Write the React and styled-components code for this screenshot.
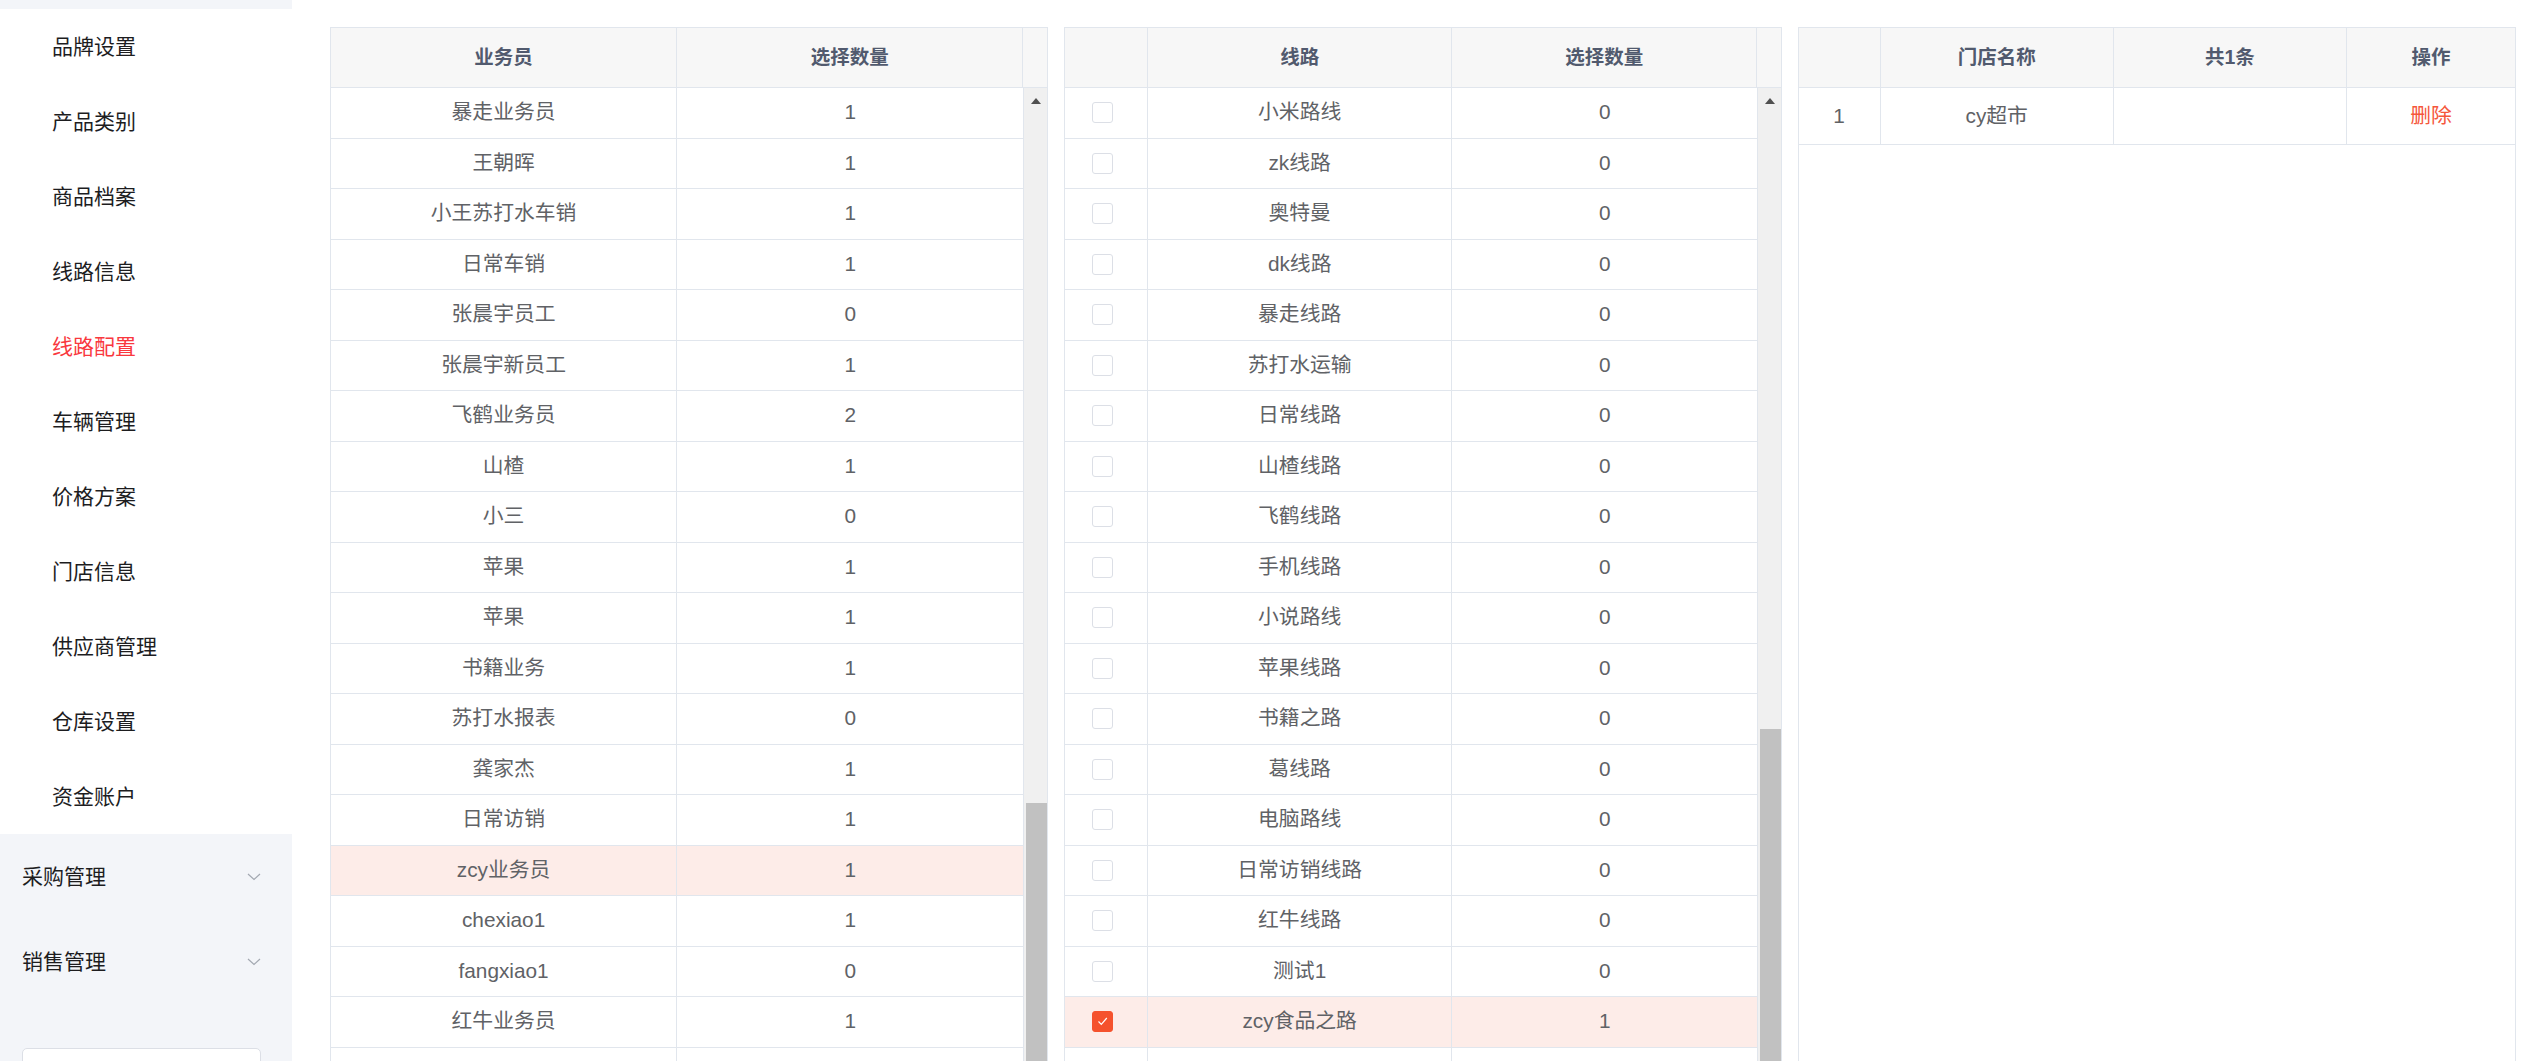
import React from "react";
import styled, { createGlobalStyle } from "styled-components";

const GlobalStyle = createGlobalStyle`
  html, body {
    margin: 0;
    padding: 0;
    background: #ffffff;
    overflow: hidden;
  }
  body {
    font-family: "Liberation Sans", "Noto Sans CJK SC", sans-serif;
  }
  * { box-sizing: border-box; }
`;

const Layout = styled.div`
  display: flex;
  height: 1061px;
  overflow: hidden;
`;

const Sidebar = styled.aside`
  width: 292px;
  flex-shrink: 0;
  background: #f3f5f9;
  padding-top: 9px;
  display: flex;
  flex-direction: column;
  & > * { flex-shrink: 0; }
`;

const SubMenu = styled.ul`
  list-style: none;
  margin: 0;
  padding: 0;
  background: #ffffff;
`;

const SubItem = styled.li`
  height: 75px;
  display: flex;
  align-items: center;
  padding-left: 52px;
  font-size: 21px;
  line-height: 1;
  color: ${(p) => (p.$active ? "#f9383e" : "#1d1d1f")};
`;

const ParentItem = styled.div`
  height: 85px;
  display: flex;
  align-items: center;
  justify-content: space-between;
  padding: 0 31px 0 22px;
  font-size: 21px;
  line-height: 1;
  color: #1d1d1f;
`;

const SearchBox = styled.div`
  margin: 44px 31px 0 22px;
  height: 44px;
  border: 1px solid #dcdfe6;
  border-radius: 5px;
  background: #ffffff;
`;

const Main = styled.main`
  flex: 1;
  display: flex;
  gap: 15.5px;
  align-items: flex-start;
  padding: 27px 5px 0 38px;
  min-width: 0;
`;

const Panel = styled.section`
  flex: 1;
  min-width: 0;
  height: 1120px;
  border: 1px solid #e1e6ed;
  display: flex;
  flex-direction: column;
  background: #ffffff;
`;

const HeaderRow = styled.div`
  display: grid;
  grid-template-columns: ${(p) => p.$cols};
  height: 60px;
  flex-shrink: 0;
  background: #f7f7f7;
  border-bottom: 1px solid #e1e6ed;
`;

const HeadCell = styled.div`
  display: flex;
  align-items: center;
  justify-content: center;
  font-size: 19.5px;
  font-weight: 700;
  line-height: 1;
  color: #515a6e;
  border-right: 1px solid #e1e6ed;
  &:last-child { border-right: none; }
`;

const Body = styled.div`
  flex: 1;
  display: flex;
  min-height: 0;
`;

const Rows = styled.div`
  flex: 1;
  min-width: 0;
  display: flex;
  flex-direction: column;
`;

const Row = styled.div`
  display: grid;
  grid-template-columns: ${(p) => p.$cols};
  height: ${(p) => p.$h || "50.5px"};
  flex-shrink: 0;
  border-bottom: 1px solid #e1e6ed;
  background: ${(p) => (p.$selected ? "#fdece8" : "#ffffff")};
`;

const Cell = styled.div`
  display: flex;
  align-items: center;
  justify-content: center;
  font-size: 20.8px;
  line-height: 1;
  color: ${(p) => (p.$danger ? "#f5573b" : "#606266")};
  border-right: 1px solid #e1e6ed;
  white-space: nowrap;
  &:last-child { border-right: none; }
`;

const ScrollTrack = styled.div`
  width: 24px;
  flex-shrink: 0;
  background: #f0f0f0;
  border-left: 1px solid #e1e6ed;
  display: flex;
  flex-direction: column;
  align-items: center;
  padding-top: 10px;
`;

const UpArrow = styled.div`
  width: 0;
  height: 0;
  border-left: 5.5px solid transparent;
  border-right: 5.5px solid transparent;
  border-bottom: 6px solid #505050;
  flex-shrink: 0;
`;

const Thumb = styled.div`
  width: 21px;
  margin-left: 1px;
  margin-top: ${(p) => p.$offset}px;
  height: 600px;
  flex-shrink: 0;
  background: #c1c1c1;
`;

const CheckBox = styled.span`
  width: 21px;
  height: 21px;
  border-radius: 3px;
  border: 1px solid ${(p) => (p.$checked ? "#f5522d" : "#dcdfe6")};
  background: ${(p) => (p.$checked ? "#f5522d" : "#ffffff")};
  display: inline-flex;
  align-items: center;
  justify-content: center;
  margin-left: -6px;
`;

const Chevron = () => (
  <svg width="14" height="8" viewBox="0 0 14 8" fill="none">
    <path d="M1 1 L7 6.5 L13 1" stroke="#a3a8b1" strokeWidth="1.2" />
  </svg>
);

const CheckMark = () => (
  <svg width="15" height="15" viewBox="0 0 15 15" fill="none">
    <path d="M3.5 7.5 L6.3 10.3 L11.8 4" stroke="#ffffff" strokeWidth="1.2" />
  </svg>
);

const menuItems = [
  "品牌设置",
  "产品类别",
  "商品档案",
  "线路信息",
  "线路配置",
  "车辆管理",
  "价格方案",
  "门店信息",
  "供应商管理",
  "仓库设置",
  "资金账户",
];

const salesmen = [
  ["暴走业务员", 1],
  ["王朝晖", 1],
  ["小王苏打水车销", 1],
  ["日常车销", 1],
  ["张晨宇员工", 0],
  ["张晨宇新员工", 1],
  ["飞鹤业务员", 2],
  ["山楂", 1],
  ["小三", 0],
  ["苹果", 1],
  ["苹果", 1],
  ["书籍业务", 1],
  ["苏打水报表", 0],
  ["龚家杰", 1],
  ["日常访销", 1],
  ["zcy业务员", 1, true],
  ["chexiao1", 1],
  ["fangxiao1", 0],
  ["红牛业务员", 1],
  ["", ""],
];

const routes = [
  ["小米路线", 0],
  ["zk线路", 0],
  ["奥特曼", 0],
  ["dk线路", 0],
  ["暴走线路", 0],
  ["苏打水运输", 0],
  ["日常线路", 0],
  ["山楂线路", 0],
  ["飞鹤线路", 0],
  ["手机线路", 0],
  ["小说路线", 0],
  ["苹果线路", 0],
  ["书籍之路", 0],
  ["葛线路", 0],
  ["电脑路线", 0],
  ["日常访销线路", 0],
  ["红牛线路", 0],
  ["测试1", 0],
  ["zcy食品之路", 1, true],
  ["", "", false, true],
];

const stores = [["1", "cy超市"]];

export default function App() {
  return (
    <>
      <GlobalStyle />
      <Layout>
        <Sidebar>
          <SubMenu>
            {menuItems.map((m) => (
              <SubItem key={m} $active={m === "线路配置"}>
                {m}
              </SubItem>
            ))}
          </SubMenu>
          <ParentItem>
            <span>采购管理</span>
            <Chevron />
          </ParentItem>
          <ParentItem>
            <span>销售管理</span>
            <Chevron />
          </ParentItem>
          <SearchBox />
        </Sidebar>

        <Main>
          <Panel>
            <HeaderRow $cols="1fr 1fr 24px">
              <HeadCell>业务员</HeadCell>
              <HeadCell>选择数量</HeadCell>
              <HeadCell />
            </HeaderRow>
            <Body>
              <Rows>
                {salesmen.map(([name, n, sel], i) => (
                  <Row key={i} $cols="1fr 1fr" $selected={sel}>
                    <Cell>{name}</Cell>
                    <Cell>{n}</Cell>
                  </Row>
                ))}
              </Rows>
              <ScrollTrack>
                <UpArrow />
                <Thumb $offset={699} />
              </ScrollTrack>
            </Body>
          </Panel>

          <Panel>
            <HeaderRow $cols="83px 1fr 1fr 24px">
              <HeadCell />
              <HeadCell>线路</HeadCell>
              <HeadCell>选择数量</HeadCell>
              <HeadCell />
            </HeaderRow>
            <Body>
              <Rows>
                {routes.map(([name, n, sel, blank], i) => (
                  <Row key={i} $cols="83px 1fr 1fr" $selected={sel}>
                    <Cell>
                      {!blank && (
                        <CheckBox $checked={sel}>{sel && <CheckMark />}</CheckBox>
                      )}
                    </Cell>
                    <Cell>{name}</Cell>
                    <Cell>{n}</Cell>
                  </Row>
                ))}
              </Rows>
              <ScrollTrack>
                <UpArrow />
                <Thumb $offset={625} />
              </ScrollTrack>
            </Body>
          </Panel>

          <Panel>
            <HeaderRow $cols="82px 1fr 1fr 168px">
              <HeadCell />
              <HeadCell>门店名称</HeadCell>
              <HeadCell>共1条</HeadCell>
              <HeadCell>操作</HeadCell>
            </HeaderRow>
            <Body>
              <Rows>
                {stores.map(([idx, name]) => (
                  <Row key={idx} $cols="82px 1fr 1fr 168px" $h="57px">
                    <Cell>{idx}</Cell>
                    <Cell>{name}</Cell>
                    <Cell />
                    <Cell $danger>删除</Cell>
                  </Row>
                ))}
              </Rows>
            </Body>
          </Panel>
        </Main>
      </Layout>
    </>
  );
}
